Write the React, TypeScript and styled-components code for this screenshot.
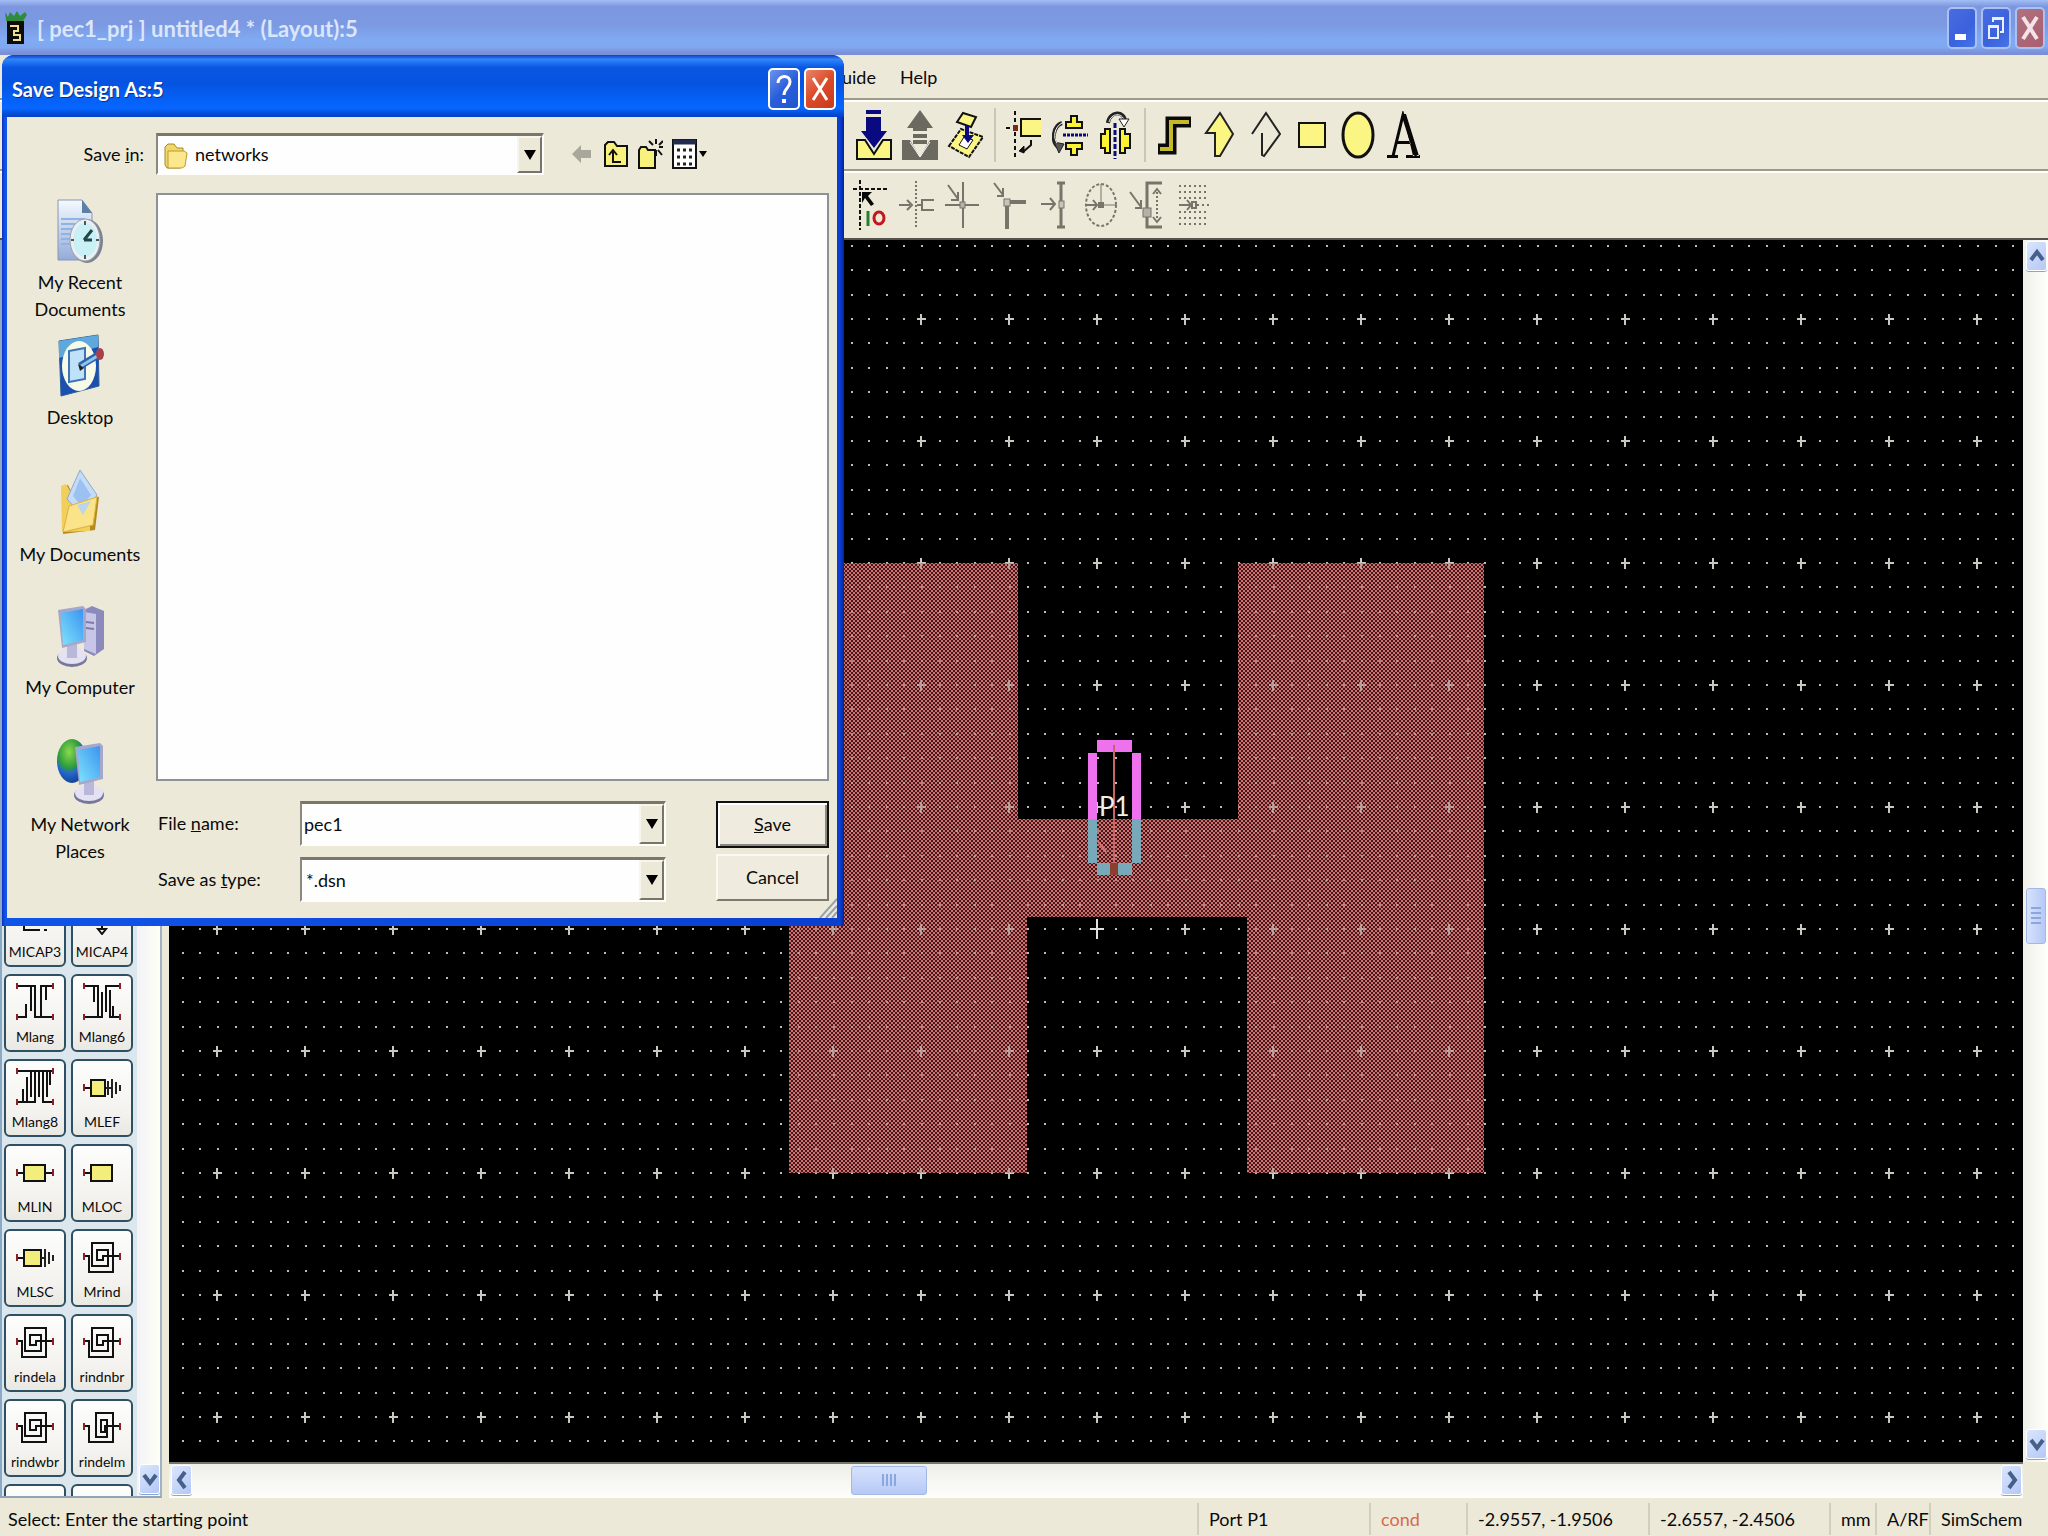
import React from "react";
import styled, { createGlobalStyle, css } from "styled-components";

const FACE = "#ece9d8";
const INK = "#0a0a0a";

const GlobalStyle = createGlobalStyle`
  * { box-sizing: border-box; }
  html, body { margin: 0; padding: 0; height: 100%; }
  body, button, input, select {
    font-family: Lato, "Liberation Sans", sans-serif;
    font-size: 18px;
    line-height: 27px;
    color: ${INK};
  }
  button { padding: 0; border: 0; background: none; cursor: pointer; }
  svg { display: block; flex: none; }
`;

/* ---------- application frame ---------- */

const Frame = styled.div`
  position: relative;
  display: flex;
  flex-direction: column;
  height: 100vh;
  overflow: hidden;
  background: ${FACE};
`;

const TitleBar = styled.header`
  display: flex;
  align-items: center;
  gap: 10px;
  height: 55px;
  flex: none;
  padding: 0 3px 0 5px;
  background: linear-gradient(#a3bdf5 0, #7d97df 12%, #7c99e2 45%, #80aaf2 72%, #7fa8f0 86%, #7a8fd8 96%, #7a8fd8 100%);
`;

const Title = styled.h1`
  flex: 1;
  margin: 0;
  padding-top: 2px;
  font-size: 22px;
  line-height: 30px;
  font-weight: 700;
  color: #dbe6fb;
`;

const WindowButtons = styled.div`
  display: flex;
  gap: 4px;
`;

const WindowButton = styled.button<{ $tone: "blue" | "rose" | "help" | "red"; $wide?: boolean }>`
  display: grid;
  place-items: center;
  width: ${(p) => (p.$wide ? 32 : 30)}px;
  height: 42px;
  border: 2px solid ${(p) => (p.$tone === "blue" || p.$tone === "rose" ? "#a9c1f5" : "#ffffff")};
  border-radius: 5px;
  background: ${(p) =>
    ({
      blue: "linear-gradient(135deg, #4a6be0, #3a62dc 60%, #4674e8)",
      rose: "linear-gradient(135deg, #b0717f, #a85f70)",
      help: "linear-gradient(135deg, #6c94ee, #2a5fdc 50%, #1f55cc)",
      red: "linear-gradient(135deg, #e88468, #dc4a28 50%, #c53c1c)",
    })[p.$tone]};
`;

const MenuBar = styled.nav`
  display: flex;
  align-items: center;
  gap: 24px;
  height: 43px;
  flex: none;
  padding: 2px 0 0 842px;
`;

const MenuItem = styled.button``;

const ToolBar = styled.div<{ $height: number; $start: number }>`
  display: flex;
  align-items: center;
  gap: 5px;
  height: ${(p) => p.$height}px;
  flex: none;
  padding-left: ${(p) => p.$start}px;
  border-top: 2px solid #9c9a8c;
  box-shadow: inset 0 2px 0 #fffefa;
`;

const ToolGroup = styled.div`
  display: flex;
`;

const ToolButton = styled.button`
  display: grid;
  place-items: center;
  width: 46px;
  height: 52px;
`;

const Divider = styled.span`
  width: 2px;
  height: 54px;
  background: #c9c6b6;
`;

const Workspace = styled.main`
  display: flex;
  flex: 1;
  min-height: 0;
  border-top: 2px solid #55544c;
`;

/* ---------- palette ---------- */

const PalettePanel = styled.aside`
  display: flex;
  width: 169px;
  flex: none;
  padding-right: 7px;
  overflow: hidden;
`;

const PaletteGrid = styled.div`
  display: grid;
  grid-template-columns: 62px 62px;
  grid-auto-rows: 78px;
  align-content: start;
  gap: 7px 5px;
  flex: 1;
  padding: 649px 0 0 2px;
  border-left: 2px solid #8aa9c4;
  border-bottom: 2px solid #8fa6b4;
  background: #dbe7ec;
  overflow: hidden;
`;

const PaletteButton = styled.button`
  display: flex;
  flex-direction: column;
  align-items: center;
  justify-content: flex-end;
  gap: 7px;
  padding-bottom: 3px;
  border: 2px solid #2d5163;
  border-radius: 6px;
  background: linear-gradient(#fdfdfc, #f3f2ee 70%, #e9e8e2);
  font-size: 14px;
  line-height: 20px;
  overflow: hidden;
`;

const PaletteTrack = styled.div`
  display: flex;
  flex-direction: column;
  justify-content: flex-end;
  width: 25px;
  padding: 2px;
  background: linear-gradient(90deg, #f2f2f8, #fffff6);
  border-right: 2px solid #9fb3c4;
  border-bottom: 2px solid #8fa6b4;
`;

/* ---------- drawing area ---------- */

const DrawingArea = styled.section`
  display: grid;
  grid-template: minmax(0, 1fr) 36px / minmax(0, 1fr) 25px;
  flex: 1;
  min-width: 0;
`;

const Canvas = styled.div`
  overflow: hidden;
  background: #000;
`;

const VerticalBar = styled.div`
  display: flex;
  flex-direction: column;
  padding: 1px 1px 3px 3px;
  background: linear-gradient(90deg, #f0f0ea, #fefefc);
`;

const HorizontalBar = styled.div`
  display: flex;
  align-items: center;
  padding: 2px 1px 4px 2px;
  border-top: 2px solid #77766c;
  background: linear-gradient(#efefe9, #fefefc);
`;

const TrackPart = styled.span<{ $share: number }>`
  flex: ${(p) => p.$share};
`;

const ScrollButton = styled.button`
  display: grid;
  place-items: center;
  flex: none;
  width: 21px;
  height: 30px;
  border: 1px solid #fff;
  border-radius: 3px;
  background: linear-gradient(135deg, #dbe6fd, #b4c8f6);
  box-shadow: 0 1px 0 #8ba4d8;
`;

const Thumb = styled.span<{ $across?: boolean }>`
  display: grid;
  place-items: center;
  flex: none;
  width: ${(p) => (p.$across ? 76 : 20)}px;
  height: ${(p) => (p.$across ? 29 : 56)}px;
  border: 1px solid #a4b8e4;
  border-radius: 3px;
  background: ${(p) =>
    p.$across ? "linear-gradient(#d6e2fd, #b6c9f5)" : "linear-gradient(90deg, #d6e2fd, #b6c9f5)"};
`;

/* ---------- status bar ---------- */

const StatusBar = styled.footer`
  display: flex;
  align-items: center;
  height: 38px;
  flex: none;
  padding-top: 4px;
`;

const StatusCell = styled.span<{ $width?: number; $color?: string }>`
  flex: ${(p) => (p.$width ? `0 0 ${p.$width}px` : "1")};
  padding-left: ${(p) => (p.$width ? 10 : 8)}px;
  border-left: ${(p) => (p.$width ? "2px solid #d2cfbf" : "0")};
  color: ${(p) => p.$color ?? INK};
  line-height: 32px;
  white-space: nowrap;
`;

/* ---------- save dialog ---------- */

const Dialog = styled.section`
  position: absolute;
  left: 2px;
  top: 55px;
  width: 842px;
  padding: 0 7px 8px 5px;
  border-radius: 12px 12px 0 0;
  background: linear-gradient(90deg, #0a2fc0, #1055e8 3px, #0a3fd0 calc(100% - 4px), #0522a0);
`;

const DialogTitleBar = styled.header`
  display: flex;
  align-items: center;
  justify-content: space-between;
  height: 62px;
  margin: 0 -7px 0 -5px;
  padding: 6px 8px 0 10px;
  border-radius: 12px 12px 0 0;
  background: linear-gradient(#0b3fc0 0, #2f85fb 7%, #0a57e4 20%, #0553e0 45%, #0560f5 70%, #0766ff 86%, #0344c8 98%);
`;

const DialogTitle = styled.h2`
  margin: 0;
  font-size: 20px;
  line-height: 28px;
  font-weight: 700;
  color: #fff;
  text-shadow: 1px 1px 0 #0a2f8c;
`;

const DialogBody = styled.form`
  display: grid;
  grid-template-columns: 149px minmax(0, 1fr);
  grid-template-rows: 42px 588px auto;
  row-gap: 18px;
  padding: 16px 8px 16px 0;
  background: ${FACE};
`;

const LookupLabel = styled.label`
  align-self: center;
  padding-right: 12px;
  text-align: right;
`;

const LookupRow = styled.div`
  display: flex;
  align-items: center;
  gap: 25px;
`;

const IconRow = styled.div`
  display: flex;
  align-items: center;
  gap: 8px;
`;

const IconButton = styled.button`
  display: grid;
  place-items: center;
  min-width: 26px;
  height: 34px;
`;

const Places = styled.nav`
  grid-row: 2 / 4;
  display: flex;
  flex-direction: column;
  padding-top: 6px;
`;

const Place = styled.button`
  display: flex;
  flex-direction: column;
  align-items: center;
  gap: 6px;
  width: 146px;
  height: 135px;
`;

const PlaceName = styled.span`
  white-space: pre;
`;

const FileList = styled.div`
  border: 2px solid #8d9296;
  background: #fefefe;
`;

const NameForm = styled.div`
  display: flex;
  justify-content: space-between;
  padding-top: 2px;
`;

const Fields = styled.div`
  display: flex;
  flex-direction: column;
  gap: 11px;
`;

const Field = styled.div`
  display: grid;
  grid-template-columns: 142px 366px;
  align-items: center;
  padding-left: 2px;
`;

const Actions = styled.div`
  display: flex;
  flex-direction: column;
  gap: 6px;
`;

const Combo = styled.div<{ $width: number; $height: number }>`
  position: relative;
  width: ${(p) => p.$width}px;
  height: ${(p) => p.$height}px;
  border: 2px solid #fffefa;
  border-top: 3px solid #7a776a;
  border-left: 2px solid #8c897c;
  background: #fefefe;
`;

const sunkenText = css<{ $indent?: number }>`
  width: 100%;
  height: 100%;
  margin: 0;
  padding: 0 26px 0 ${(p) => p.$indent ?? 2}px;
  border: 0;
  outline: 0;
  border-radius: 0;
  background: transparent;
  appearance: none;
`;

const ComboSelect = styled.select<{ $indent?: number }>`
  ${sunkenText}
`;

const ComboInput = styled.input<{ $indent?: number }>`
  ${sunkenText}
`;

const ComboArrow = styled.span`
  position: absolute;
  top: 0;
  right: 0;
  bottom: 0;
  display: grid;
  place-items: center;
  width: 25px;
  border: 2px solid #f8f6ec;
  border-right-color: #77746a;
  border-bottom-color: #77746a;
  background: ${FACE};
  pointer-events: none;
`;

const ComboIcon = styled.span`
  position: absolute;
  left: 5px;
  top: 6px;
  pointer-events: none;
`;

const PushButton = styled.button<{ $primary?: boolean }>`
  width: 113px;
  height: 47px;
  border: 2px solid;
  border-color: ${(p) => (p.$primary ? "#111" : "#fbfaf2 #7c796c #7c796c #fbfaf2")};
  background: #efecdf;
  box-shadow: ${(p) => (p.$primary ? "inset 2px 2px 0 #fff, inset -2px -2px 0 #8c897c" : "none")};
`;

const SizeGrip = styled.span`
  position: absolute;
  right: 7px;
  bottom: 8px;
`;

/* ---------- toolbar drawings ---------- */

const Y = "#fbf583";
const NAVY = "#0a0a80";
const GREY = "#77756a";

const toolsEdit = [
  {
    name: "Push into hierarchy",
    art: (
      <svg width="36" height="50">
        <path d="M1 30h8l9 14 9-14h8v19H1z" fill={Y} stroke="#111" strokeWidth="2" />
        <path d="M10 0h15v4H10zM10 7h15v14h6L18 38 5 21h5z" fill={NAVY} />
      </svg>
    ),
  },
  {
    name: "Pop out of hierarchy",
    art: (
      <svg width="36" height="50">
        <path d="M0 30h8l10 17 10-17h8v20H0z" fill="#6b6960" />
        <path d="M18 0l13 18h-6v3H11v-3H5zM11 24h14v4H11zM11 30h14v4H11z" fill="#6b6960" />
        <path d="M8 32l10 15 10-15" fill="none" stroke="#fff" strokeWidth="1" />
      </svg>
    ),
  },
  {
    name: "Insert component",
    art: (
      <svg width="38" height="50">
        <path d="M2 36l12-17 22 8-14 20z" fill={Y} stroke="#111" strokeWidth="2" strokeDasharray="4 1" />
        <path d="M12 35l5-8 9 3-6 9z" fill="#fff" stroke="#111" strokeWidth="1" />
        <path d="M10 12l6-9 13 4-5 10z" fill={Y} stroke="#111" strokeWidth="2" />
        <path d="M18 16h4v9h5l-6 8-6-8h3z" fill={NAVY} />
      </svg>
    ),
  },
];

const toolsFlip = [
  {
    name: "Rotate around reference",
    art: (
      <svg width="36" height="50">
        <path d="M9 1v48M0 18h8" stroke="#111" strokeWidth="2" strokeDasharray="4 3" />
        <path d="M35 9H15v17h20" fill={Y} stroke="#111" strokeWidth="2" />
        <rect x="7" y="15" width="5" height="6" fill="#7a2a1c" />
        <path d="M25 30v5l-8 7" fill="none" stroke="#111" strokeWidth="2" />
        <path d="M13 41l5-5v7z" fill="#111" stroke="#111" strokeWidth="1" />
      </svg>
    ),
  },
  {
    name: "Mirror about X",
    art: (
      <svg width="36" height="50">
        <path d="M19 6h6v6h5v6H14v-6h5zM14 33h16v6h-5v6h-6v-6h-5z" fill="#fdf232" stroke="#111" strokeWidth="2" />
        <path d="M11 25h25" stroke={NAVY} strokeWidth="3" strokeDasharray="3 1" />
        <path d="M10 13c-9 3-11 18-4 24" fill="none" stroke="#222" strokeWidth="4" />
        <path d="M2 32l10 2-5 9z" fill="#555" stroke="#222" />
        <path d="M10 13c-8 4-9 15-5 20" fill="none" stroke="#fff" strokeWidth="1" />
      </svg>
    ),
  },
  {
    name: "Mirror about Y",
    art: (
      <svg width="36" height="50">
        <path d="M3 24h4v-5h5v24H7v-5H3zM22 19h5v5h5v14h-5v5h-5z" fill="#fdf232" stroke="#111" strokeWidth="2" />
        <path d="M17 13v36" stroke={NAVY} strokeWidth="3" strokeDasharray="5 2" />
        <path d="M10 13c1-12 17-13 17-1" fill="none" stroke="#222" strokeWidth="4" />
        <path d="M11 12c2-9 14-10 15-1" fill="none" stroke="#fff" strokeWidth="1" />
        <path d="M21 9h10l-5 8z" fill="#fff" stroke="#222" />
      </svg>
    ),
  },
];

const toolsDraw = [
  {
    name: "Insert path",
    art: (
      <svg width="34" height="42">
        <path d="M1 35h13V8h20" fill="none" stroke="#0a0a0a" strokeWidth="11" />
        <path d="M3 35h11V8h18" fill="none" stroke="#c4b928" strokeWidth="4" />
      </svg>
    ),
  },
  {
    name: "Insert polygon",
    art: (
      <svg width="32" height="50">
        <path d="M16 3l13 21-13 22h-5V23H2z" fill={Y} stroke="#222" strokeWidth="2" />
      </svg>
    ),
  },
  {
    name: "Insert polyline",
    art: (
      <svg width="32" height="50">
        <path d="M2 24L16 3l14 21-16 22-2-1V23" fill="none" stroke="#222" strokeWidth="2" />
      </svg>
    ),
  },
  {
    name: "Insert rectangle",
    art: (
      <svg width="28" height="28">
        <rect x="1" y="2" width="26" height="24" fill={Y} stroke="#111" strokeWidth="2" />
      </svg>
    ),
  },
  {
    name: "Insert circle",
    art: (
      <svg width="34" height="48">
        <ellipse cx="17" cy="24" rx="15" ry="22" fill={Y} stroke="#111" strokeWidth="3" />
      </svg>
    ),
  },
  {
    name: "Insert text",
    art: (
      <svg width="36" height="48">
        <path d="M7 45L17 4l13 41" fill="none" stroke="#080808" strokeWidth="3" />
        <path d="M17 3l10 42h6L20 3zM1 44h11v3H1zM20 44h14v3H20zM10 30h16v3H10z" fill="#080808" />
      </svg>
    ),
  },
];

const snapTools = [
  {
    name: "Toggle snap",
    art: (
      <svg width="36" height="50">
        <path d="M7 0v50M0 9h36" stroke="#111" strokeWidth="2" strokeDasharray="4 2" />
        <path d="M9 12h10l-4 4 6 8-3 2-6-8-3 5z" fill="#050505" />
        <path d="M15 31v15" stroke="#2a7d2a" strokeWidth="3" />
        <ellipse cx="26" cy="38" rx="5" ry="6" fill="none" stroke="#c4161c" strokeWidth="3" />
      </svg>
    ),
  },
  {
    name: "Pin snap",
    art: (
      <svg width="36" height="50">
        <path d="M17 1v48" stroke={GREY} strokeWidth="2" strokeDasharray="2 2" />
        <path d="M0 25h11M8 20l5 5-5 5M18 25h5M35 20H23v10h12" fill="none" stroke={GREY} strokeWidth="2" />
      </svg>
    ),
  },
  {
    name: "Vertex snap",
    art: (
      <svg width="36" height="50">
        <path d="M0 25h34M18 2v46M3 5l10 14M13 12v8H6" fill="none" stroke={GREY} strokeWidth="2" />
        <rect x="15" y="22" width="5" height="6" fill="#b5b2a5" stroke={GREY} />
      </svg>
    ),
  },
  {
    name: "Edge centre snap",
    art: (
      <svg width="36" height="50">
        <path d="M16 22h19M16 24v25" stroke={GREY} strokeWidth="4" />
        <path d="M3 3l9 12M12 8v8H6" fill="none" stroke={GREY} strokeWidth="2" />
        <rect x="13" y="19" width="6" height="7" fill="#c8c5b8" stroke={GREY} />
      </svg>
    ),
  },
  {
    name: "Edge snap",
    art: (
      <svg width="36" height="50">
        <path d="M4 24h13M13 18l5 6-5 6" fill="none" stroke={GREY} strokeWidth="2" />
        <path d="M24 3v44M20 3h8M20 47h8" stroke={GREY} strokeWidth="3" />
        <rect x="22" y="21" width="5" height="7" fill="#c8c5b8" stroke={GREY} />
      </svg>
    ),
  },
  {
    name: "Arc centre snap",
    art: (
      <svg width="36" height="50">
        <ellipse cx="18" cy="25" rx="15" ry="21" fill="none" stroke={GREY} strokeWidth="2" strokeDasharray="3 2" />
        <path d="M18 4v21h15M3 25h10M10 20l4 5-4 5" fill="none" stroke={GREY} strokeWidth="1" />
        <path d="M4 25h10M10 20l4 5-4 5" fill="none" stroke={GREY} strokeWidth="2" />
        <rect x="15" y="22" width="6" height="6" fill={GREY} />
      </svg>
    ),
  },
  {
    name: "Intersection snap",
    art: (
      <svg width="36" height="50">
        <path d="M33 3H18v44h15" fill="none" stroke={GREY} strokeWidth="3" />
        <path d="M1 12l11 15M12 20v8H6" fill="none" stroke={GREY} strokeWidth="2" />
        <path d="M28 12v27" stroke={GREY} strokeWidth="2" strokeDasharray="2 2" />
        <path d="M24 14l4-5 4 5M24 37l4 5 4-5" fill="none" stroke={GREY} strokeWidth="2" />
        <rect x="14" y="28" width="8" height="9" fill="#b5b2a5" stroke={GREY} />
      </svg>
    ),
  },
  {
    name: "Grid snap",
    art: (
      <svg width="36" height="50">
        <path
          d="M4 6h30M4 12h30M4 18h30M22 25h12M4 32h30M4 38h30M4 44h30"
          stroke={GREY}
          strokeWidth="2"
          strokeDasharray="2 3"
        />
        <path d="M4 25h11M12 20l4 5-4 5" fill="none" stroke={GREY} strokeWidth="2" />
        <rect x="17" y="22" width="4" height="6" fill="none" stroke={GREY} strokeWidth="2" />
      </svg>
    ),
  },
];

/* ---------- palette drawings ---------- */

const pin = "#8c2026";

const Spiral = ({ tight }: { tight?: boolean }) => (
  <svg width="38" height="34" viewBox="0 0 38 34">
    <path d="M1 12v7M37 12v7" stroke={pin} strokeWidth="2" />
    <path
      d={
        tight
          ? "M2 15h4v16h24V2H13v24h11V9h-6v12h4v-6h14"
          : "M2 15h4v16h24V2H9v23h16V9H14v10h6v-4h16"
      }
      fill="none"
      stroke="#111"
      strokeWidth="2"
    />
  </svg>
);

const Lange = ({ rails, fingers }: { rails: string; fingers: number[][] }) => (
  <svg width="38" height="38" viewBox="0 0 38 38">
    <path d="M1 1v6M37 1v6M1 32v6M37 32v6" stroke={pin} strokeWidth="2" />
    <path
      d={rails + fingers.map(([x, a, b]) => `M${x} ${a}V${b}`).join("")}
      fill="none"
      stroke="#111"
      strokeWidth="2"
    />
  </svg>
);

const Line = ({ end }: { end: "pin" | "open" | "effect" | "short" }) => (
  <svg width="38" height="34" viewBox="0 0 38 34">
    <path d="M1 13v7" stroke={pin} strokeWidth="2" />
    <path d="M2 17h6" stroke="#111" strokeWidth="2" />
    <rect x="8" y="9" width={end === "pin" || end === "open" ? 21 : end === "short" ? 17 : 14} height="16" fill="#f3ee7c" stroke="#111" strokeWidth="2" />
    {end === "pin" && <path d="M30 17h7" stroke="#111" strokeWidth="2" />}
    {end === "pin" && <path d="M37 13v7" stroke={pin} strokeWidth="2" />}
    {end === "effect" && <path d="M23 17h5M25 10v14M29 8v19M33 11v12M37 14v6" stroke="#222" strokeWidth="2" />}
    {end === "short" && <path d="M25 17h4M29 8v18M33 11v12M37 14v6" stroke="#222" strokeWidth="2" />}
  </svg>
);

const lange4 = [[10, 22, 36], [15, 3, 29], [19, 3, 36], [25, 3, 34], [30, 3, 18]];
const lange6 = [[11, 3, 20], [15, 3, 36], [19, 10, 36], [23, 3, 30], [27, 8, 36], [30, 24, 36]];
const lange8 = [[7, 22, 36], [11, 10, 36], [15, 3, 30], [19, 3, 36], [23, 3, 30], [27, 3, 36], [31, 3, 30], [34, 3, 18]];

const palette: { name: string; art: React.ReactNode }[] = [
  {
    name: "MICAP3",
    art: (
      <svg width="38" height="34">
        <path d="M8 4v25h16M28 29h3" fill="none" stroke="#111" strokeWidth="2" />
      </svg>
    ),
  },
  {
    name: "MICAP4",
    art: (
      <svg width="38" height="34">
        <path d="M19 4v25M15 28h8l-4 5z" fill="none" stroke="#111" strokeWidth="2" />
      </svg>
    ),
  },
  { name: "Mlang", art: <Lange rails="M2 4h17M25 4h11M2 35h8M19 35h17" fingers={lange4} /> },
  { name: "Mlang6", art: <Lange rails="M2 4h13M23 4h13M2 35h17M27 35h9" fingers={lange6} /> },
  { name: "Mlang8", art: <Lange rails="M2 4h34M2 35h17M27 35h9" fingers={lange8} /> },
  { name: "MLEF", art: <Line end="effect" /> },
  { name: "MLIN", art: <Line end="pin" /> },
  { name: "MLOC", art: <Line end="open" /> },
  { name: "MLSC", art: <Line end="short" /> },
  { name: "Mrind", art: <Spiral /> },
  { name: "rindela", art: <Spiral /> },
  { name: "rindnbr", art: <Spiral /> },
  { name: "rindwbr", art: <Spiral /> },
  { name: "rindelm", art: <Spiral tight /> },
];

/* ---------- place drawings ---------- */

const Monitor = ({ x, y }: { x: number; y: number }) => (
  <g transform={`translate(${x} ${y})`}>
    <ellipse cx="15" cy="53" rx="15" ry="9" fill="#77769c" />
    <ellipse cx="15" cy="51" rx="14" ry="8" fill="#e4e2f2" />
    <path d="M10 38h10v15H10z" fill="#b9b7da" />
    <path d="M1 5l25-4 3 3v33L5 43z" fill="#a4a8cc" />
    <path d="M4 8l22-4v31L6 40z" fill="url(#screen)" />
  </g>
);

const places: { name: string; art: React.ReactNode }[] = [
  {
    name: "My Recent\nDocuments",
    art: (
      <svg width="48" height="64">
        <defs>
          <linearGradient id="sheet" x1="0" y1="0" x2="0" y2="1">
            <stop offset="0" stopColor="#f4faff" />
            <stop offset="1" stopColor="#94abd8" />
          </linearGradient>
          <linearGradient id="screen" x1="0" y1="1" x2="1" y2="0">
            <stop offset="0" stopColor="#7ee4fb" />
            <stop offset="1" stopColor="#3c93f0" />
          </linearGradient>
        </defs>
        <path d="M2 1h24l10 13v47H2z" fill="url(#sheet)" stroke="#8796b4" />
        <path d="M26 1v13h10z" fill="#5c7fa8" />
        <path d="M5 20h24M5 25h20M5 30h12M5 35h9M5 40h9M5 45h9" stroke="#8fb4e4" strokeWidth="2" />
        <ellipse cx="31" cy="42" rx="16" ry="22" fill="#7c8290" />
        <ellipse cx="29" cy="41" rx="15" ry="21" fill="#e9f0f4" stroke="#9aa0a8" />
        <ellipse cx="29" cy="41" rx="12" ry="17" fill="#c9f0f4" />
        <path d="M28 41l8-10M28 41h8" stroke="#204848" strokeWidth="3" />
        <path d="M29 22v4M29 56v4M15 41h3M40 41h3" stroke="#555" strokeWidth="2" />
      </svg>
    ),
  },
  {
    name: "Desktop",
    art: (
      <svg width="48" height="64">
        <path d="M3 7l39-6 1 51-38 10z" fill="#1c4fae" stroke="#2a5f9c" />
        <path d="M3 7l39-6v12L3 24z" fill="#5fa8dc" />
        <ellipse cx="23" cy="32" rx="17" ry="25" fill="#f6fbe8" />
        <path d="M13 17l16-3v31l-16 3z" fill="#bfe2fa" stroke="#3c74b4" strokeWidth="2" />
        <path d="M24 32l20-12" stroke="#2f62a8" strokeWidth="7" />
        <path d="M25 32l18-11" stroke="#8cc4f0" strokeWidth="3" />
        <ellipse cx="44" cy="20" rx="4" ry="6" fill="#a8404c" />
        <path d="M22 30l6 4-4 3z" fill="#222" />
      </svg>
    ),
  },
  {
    name: "My Documents",
    art: (
      <svg width="48" height="66">
        <path d="M7 18l5-2 3 6 28 6-4 33-32 4z" fill="#b38a1c" />
        <path d="M5 17l5-2 4 7 20 4v36L6 63z" fill="#f2cf5a" />
        <path d="M24 1l17 25-14 22-16-18z" fill="#c4dcf8" stroke="#8fa8cc" />
        <path d="M24 9l11 17-9 12-9-11z" fill="#9cc0f0" />
        <path d="M13 37l28-9-4 28-30 7z" fill="#fbe38a" stroke="#dcb23c" />
        <path d="M21 36l14-4-8 14z" fill="#bcd4ec" />
      </svg>
    ),
  },
  {
    name: "My Computer",
    art: (
      <svg width="48" height="64">
        <path d="M28 6l8-4 12 5v38l-10 7-10-5z" fill="#8c8abc" />
        <path d="M28 8l12 2v40l-12-5z" fill="#c8c6e6" />
        <path d="M30 18l8 1M30 24l8 1" stroke="#7c7aa8" strokeWidth="2" />
        <Monitor x={1} y={1} />
      </svg>
    ),
  },
  {
    name: "My Network\nPlaces",
    art: (
      <svg width="48" height="66">
        <defs>
          <radialGradient id="globe" cx="0.4" cy="0.3" r="0.8">
            <stop offset="0" stopColor="#8cd84c" />
            <stop offset="0.45" stopColor="#2c9c3c" />
            <stop offset="0.6" stopColor="#2468cc" />
            <stop offset="1" stopColor="#0c3484" />
          </radialGradient>
        </defs>
        <ellipse cx="16" cy="22" rx="15" ry="22" fill="url(#globe)" />
        <Monitor x={18} y={3} />
      </svg>
    ),
  },
];

/* ---------- layout canvas ---------- */

const STEP_X = 88;
const STEP_Y = 122;
const ORIGIN = { x: 928, y: 689 };

function buildGrid() {
  let dots = "";
  let crosses = "";
  for (let j = -29; j <= 21; j++) {
    const y = Math.round(ORIGIN.y + (j * STEP_Y) / 5);
    for (let i = -52; i <= 53; i++) {
      const x = Math.round(ORIGIN.x + (i * STEP_X) / 5);
      if (y < 0 || x < 8 || x > 1846 || y > 1205) continue;
      if (i % 5 === 0 && j % 5 === 0) {
        crosses += `M${x - 4} ${y}h9M${x} ${y - 5}v11`;
      } else {
        dots += `M${x} ${y}h2`;
      }
    }
  }
  return { dots, crosses };
}

const grid = buildGrid();
const METAL = "M560 323H849V579H1069V323H1315V933H1078V677H858V933H620V677H560Z";

const LayoutDrawing = () => (
  <svg width="100%" height="1222" role="img" aria-label="Layout">
    <defs>
      <pattern id="hatch" width="4" height="4" patternUnits="userSpaceOnUse">
        <rect width="4" height="4" fill="#44191a" />
        <path d="M0 0h2v2H0zM2 2h2v2H2z" fill="#cf6f6f" />
      </pattern>
    </defs>
    <path d={METAL} fill="url(#hatch)" />
    <path d={grid.dots} stroke="#bdbdb6" strokeWidth="2" />
    <path d={grid.crosses} stroke="#c8c8c0" strokeWidth="2" />
    <path d="M921 689h14M928 679v20" stroke="#e0e0e0" strokeWidth="2" />
    <path d={METAL} fill="url(#hatch)" fillOpacity="0.3" />
    <path d="M928 500h35v12h-35zM919 513h9v66h-9zM963 513h9v66h-9z" fill="#ee72ee" />
    <path d="M919 579h9v44h-9zM963 579h9v44h-9zM928 623h13v12h-13zM949 623h14v12h-14z" fill="#78a9b8" />
    <path d="M941 623h8v12h-8z" fill="#8c3f30" />
    <path d="M945 505v118" stroke="#c86464" strokeWidth="2" />
    <path d="M928 600l9 12" stroke="#d87070" strokeWidth="2" />
    <text x="930" y="576" fontSize="26" fill="#f0f0ea">
      P1
    </text>
  </svg>
);

const Chevron = ({ d }: { d: string }) => (
  <svg width="16" height="20" viewBox="0 0 16 20">
    <path d={d} fill="none" stroke="#46608c" strokeWidth="4" />
  </svg>
);

const Triangle = () => (
  <svg width="12" height="10">
    <path d="M0 0h12L6 10z" fill="#000" />
  </svg>
);

const Tools = ({ items }: { items: { name: string; art: React.ReactNode }[] }) => (
  <ToolGroup>
    {items.map((t) => (
      <ToolButton key={t.name} type="button" aria-label={t.name}>
        {t.art}
      </ToolButton>
    ))}
  </ToolGroup>
);

const SaveDialog = () => (
  <Dialog role="dialog" aria-labelledby="dialog-title">
    <DialogTitleBar>
      <DialogTitle id="dialog-title">Save Design As:5</DialogTitle>
      <WindowButtons>
        <WindowButton type="button" $tone="help" $wide aria-label="Help">
          <svg width="18" height="30">
            <path d="M3 9c0-8 12-9 12-1 0 6-6 6-6 13" fill="none" stroke="#fff" strokeWidth="3" />
            <path d="M7 25h4v4H7z" fill="#fff" />
          </svg>
        </WindowButton>
        <WindowButton type="button" $tone="red" $wide aria-label="Close dialog">
          <svg width="18" height="26">
            <path d="M2 2l14 22M16 2L2 24" stroke="#fff" strokeWidth="3" />
          </svg>
        </WindowButton>
      </WindowButtons>
    </DialogTitleBar>
    <DialogBody onSubmit={(e) => e.preventDefault()}>
      <LookupLabel htmlFor="save-in">
        Save <u>i</u>n:
      </LookupLabel>
      <LookupRow>
        <Combo $width={388} $height={42}>
          <ComboIcon>
            <svg width="26" height="28">
              <path d="M2 5l3-3h6l3 4h6v17l-3 3H4l-2-3z" fill="#f3d766" stroke="#a48a2c" />
              <path d="M5 9h16l3 2-2 13-3 2H5z" fill="#fbe88c" stroke="#b89a34" />
            </svg>
          </ComboIcon>
          <ComboSelect id="save-in" $indent={37} defaultValue="networks">
            <option>networks</option>
          </ComboSelect>
          <ComboArrow>
            <Triangle />
          </ComboArrow>
        </Combo>
        <IconRow>
          <IconButton type="button" aria-label="Back">
            <svg width="20" height="20">
              <path d="M0 10L9 1v5h10v8H9v5z" fill="#a9a79b" />
            </svg>
          </IconButton>
          <IconButton type="button" aria-label="Up one level">
            <svg width="24" height="28">
              <path d="M1 5l3-3h6l3 4h10v20H1z" fill="#f8f27c" stroke="#111" strokeWidth="2" />
              <path d="M9 11v11h8M5 15l4-5 4 5" fill="none" stroke="#111" strokeWidth="2" />
            </svg>
          </IconButton>
          <IconButton type="button" aria-label="New folder">
            <svg width="26" height="32">
              <path d="M2 12l2-3h5l2 3h7v18H2z" fill="#f8f27c" stroke="#111" strokeWidth="2" />
              <path d="M19 1v5M19 12v6M12 3l4 4M26 3l-4 4M22 9h4M21 12l4 5" stroke="#111" strokeWidth="2" />
            </svg>
          </IconButton>
          <IconButton type="button" aria-label="View menu">
            <svg width="36" height="32">
              <rect x="2" y="2" width="23" height="28" fill="#fff" stroke="#111" strokeWidth="2" />
              <path d="M2 4h23" stroke="#222c50" strokeWidth="5" />
              <path d="M6 12h17M6 19h17M6 26h17" stroke="#222" strokeWidth="3" strokeDasharray="3 3" />
              <path d="M28 13h8l-4 6z" fill="#000" />
            </svg>
          </IconButton>
        </IconRow>
      </LookupRow>
      <Places aria-label="Places">
        {places.map((p) => (
          <Place key={p.name} type="button">
            {p.art}
            <PlaceName>{p.name}</PlaceName>
          </Place>
        ))}
      </Places>
      <FileList />
      <NameForm>
        <Fields>
          <Field>
            <label htmlFor="file-name">
              File <u>n</u>ame:
            </label>
            <Combo $width={366} $height={45}>
              <ComboInput id="file-name" defaultValue="pec1" />
              <ComboArrow>
                <Triangle />
              </ComboArrow>
            </Combo>
          </Field>
          <Field>
            <label htmlFor="file-type">
              Save as <u>t</u>ype:
            </label>
            <Combo $width={366} $height={45}>
              <ComboSelect id="file-type" $indent={4} defaultValue="*.dsn">
                <option>*.dsn</option>
              </ComboSelect>
              <ComboArrow>
                <Triangle />
              </ComboArrow>
            </Combo>
          </Field>
        </Fields>
        <Actions>
          <PushButton type="submit" $primary>
            <u>S</u>ave
          </PushButton>
          <PushButton type="button">Cancel</PushButton>
        </Actions>
      </NameForm>
    </DialogBody>
    <SizeGrip>
      <svg width="18" height="20">
        <path d="M1 20L18 1M7 20L18 8M13 20l5-6" stroke="#98a0b0" strokeWidth="2" />
      </svg>
    </SizeGrip>
  </Dialog>
);

export default function App() {
  return (
    <Frame>
      <GlobalStyle />
      <TitleBar>
        <svg width="22" height="36">
          <path d="M0 2l3 5 2-5 4 4 3-5 3 5 5-4 2 3-4 6H1z" fill="#2f8c3c" />
          <path d="M2 11h17v23H2z" fill="#0c0c08" />
          <path d="M5 16h8v5H8M9 21v4h6v5H8" fill="none" stroke="#f0e08c" strokeWidth="2" />
        </svg>
        <Title>[ pec1_prj ] untitled4 * (Layout):5</Title>
        <WindowButtons>
          <WindowButton type="button" $tone="blue" aria-label="Minimize">
            <svg width="20" height="28">
              <path d="M3 20h11v6H3z" fill="#fff" />
            </svg>
          </WindowButton>
          <WindowButton type="button" $tone="blue" aria-label="Restore">
            <svg width="20" height="28">
              <path d="M7 8V4h10v14h-3M7 5h10M3 12h9v12H3zM3 13h9" fill="none" stroke="#e8effd" strokeWidth="2" />
            </svg>
          </WindowButton>
          <WindowButton type="button" $tone="rose" aria-label="Close">
            <svg width="20" height="28">
              <path d="M3 3l14 22M17 3L3 25" stroke="#f4e4ea" strokeWidth="4" />
            </svg>
          </WindowButton>
        </WindowButtons>
      </TitleBar>
      <MenuBar>
        <MenuItem type="button">uide</MenuItem>
        <MenuItem type="button">Help</MenuItem>
      </MenuBar>
      <ToolBar $height={71} $start={851}>
        <Tools items={toolsEdit} />
        <Divider />
        <Tools items={toolsFlip} />
        <Divider />
        <Tools items={toolsDraw} />
      </ToolBar>
      <ToolBar $height={69} $start={848}>
        <Tools items={snapTools} />
      </ToolBar>
      <Workspace>
        <PalettePanel>
          <PaletteGrid>
            {palette.map((p) => (
              <PaletteButton key={p.name} type="button">
                {p.art}
                {p.name}
              </PaletteButton>
            ))}
            <PaletteButton type="button" aria-label="More components" />
            <PaletteButton type="button" aria-label="More components" />
          </PaletteGrid>
          <PaletteTrack>
            <ScrollButton type="button" aria-label="Scroll palette down">
              <Chevron d="M2 6l6 8 6-8" />
            </ScrollButton>
          </PaletteTrack>
        </PalettePanel>
        <DrawingArea>
          <Canvas>
            <LayoutDrawing />
          </Canvas>
          <VerticalBar>
            <ScrollButton type="button" aria-label="Scroll up">
              <Chevron d="M2 14l6-8 6 8" />
            </ScrollButton>
            <TrackPart $share={56} />
            <Thumb>
              <svg width="10" height="20">
                <path d="M0 2h10M0 7h10M0 12h10M0 17h10" stroke="#8ca6e0" strokeWidth="2" />
              </svg>
            </Thumb>
            <TrackPart $share={44} />
            <ScrollButton type="button" aria-label="Scroll down">
              <Chevron d="M2 6l6 8 6-8" />
            </ScrollButton>
          </VerticalBar>
          <HorizontalBar>
            <ScrollButton type="button" aria-label="Scroll left">
              <Chevron d="M11 2l-6 8 6 8" />
            </ScrollButton>
            <TrackPart $share={38} />
            <Thumb $across>
              <svg width="16" height="12">
                <path d="M2 0v12M6 0v12M10 0v12M14 0v12" stroke="#8ca6e0" strokeWidth="2" />
              </svg>
            </Thumb>
            <TrackPart $share={62} />
            <ScrollButton type="button" aria-label="Scroll right">
              <Chevron d="M5 2l6 8-6 8" />
            </ScrollButton>
          </HorizontalBar>
        </DrawingArea>
      </Workspace>
      <StatusBar>
        <StatusCell>Select: Enter the starting point</StatusCell>
        <StatusCell $width={172}>Port P1</StatusCell>
        <StatusCell $width={97} $color="#d8694f">
          cond
        </StatusCell>
        <StatusCell $width={182}>-2.9557, -1.9506</StatusCell>
        <StatusCell $width={181}>-2.6557, -2.4506</StatusCell>
        <StatusCell $width={46}>mm</StatusCell>
        <StatusCell $width={54}>A/RF</StatusCell>
        <StatusCell $width={119}>SimSchem</StatusCell>
      </StatusBar>
      <SaveDialog />
    </Frame>
  );
}
